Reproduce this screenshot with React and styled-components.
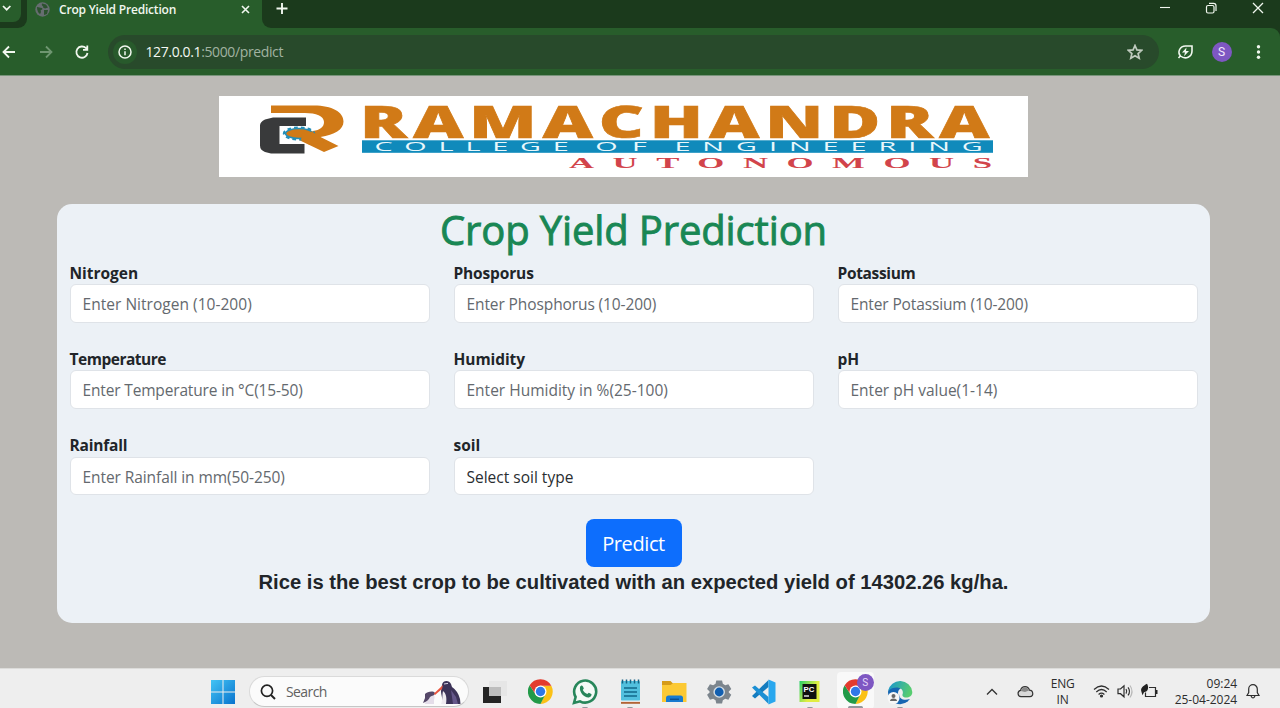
import React from "react";
import styled, { createGlobalStyle } from "styled-components";

const Global = createGlobalStyle`
  * { box-sizing: border-box; }
  html, body { margin: 0; padding: 0; }
  body { font-family: "Open Sans", "Noto Sans", sans-serif; overflow: hidden; }
`;

const Screen = styled.div`
  width: 1280px;
  height: 708px;
  display: flex;
  flex-direction: column;
  background: #bcbab6;
  overflow: hidden;
`;

/* ---------- browser ---------- */
const TabStrip = styled.div`
  height: 28px;
  display: flex;
  background: #285d2b;
  flex: none;
`;
const StripStart = styled.div`
  width: 27px;
  height: 28px;
  background: #1b3a1c;
  border-bottom-right-radius: 9px;
`;
const TabSearch = styled.div`
  width: 21px;
  height: 22px;
  background: #285d2b;
  border-bottom-right-radius: 8px;
  padding: 5px 0 0 2px;
  svg { display: block; }
`;
const Tab = styled.div`
  width: 235px;
  height: 18px;
  display: flex;
  align-items: center;
  padding: 0 12px 0 8px;
  color: #f1f7ef;
`;
const TabTitle = styled.span`
  font-size: 12px;
  font-weight: 600;
  letter-spacing: -0.2px;
  line-height: 18px;
  padding-top: 1px;
  margin-left: 9px;
  flex: 1;
  white-space: nowrap;
`;
const StripEnd = styled.div`
  flex: 1;
  height: 28px;
  background: #1b3a1c;
  border-bottom-left-radius: 9px;
  display: flex;
  justify-content: space-between;
  padding: 2px 16.500px 0 14px;
`;
const WindowButtons = styled.div`
  display: flex;
  gap: 34.3px;
`;
const ToolbarBack = styled.div`
  background: #1b3a1c;
  flex: none;
`;
const Toolbar = styled.div`
  height: 48px;
  background: #285d2b;
  border-top-right-radius: 9px;
  border-bottom: 1px solid #77947a;
  display: flex;
  align-items: center;
  padding: 0 13px 0 1px;
`;
const NavIcons = styled.div`
  display: flex;
  gap: 20.5px;
  width: 107px;
  flex: none;
`;
const UrlBar = styled.div`
  width: 1051px;
  height: 34px;
  border-radius: 17px;
  background: #284a2b;
  display: flex;
  align-items: center;
  padding: 0 16px 0 5px;
`;
const SiteInfo = styled.div`
  width: 24px;
  height: 24px;
  border-radius: 50%;
  background: #285a2c;
  display: grid;
  place-items: center;
`;
const Url = styled.div`
  flex: 1;
  margin-left: 8.5px;
  font-size: 14px;
  letter-spacing: -0.38px;
  color: #a1b2a1;
  b { font-weight: 400; color: #f4f8f3; }
`;
const Extras = styled.div`
  display: flex;
  align-items: center;
  justify-content: space-between;
  width: 91px;
  margin-left: 17px;
`;
const Avatar = styled.div`
  width: 20px;
  height: 20px;
  border-radius: 50%;
  background: #7e57c2;
  color: #f3eafd;
  font: 12px/20px Roboto, sans-serif;
  text-align: center;
`;

/* ---------- page ---------- */
const Page = styled.main`
  flex: 1;
  width: 1267px;
  display: flex;
  flex-direction: column;
  padding: 20.4px 0 0 57px;
`;
const Banner = styled.div`
  width: 809px;
  height: 81px;
  margin-left: 162px;
  background: #fff;
  svg { display: block; overflow: visible; }
`;
const Card = styled.section`
  width: 1153px;
  height: 419.4px;
  margin-top: 26.4px;
  border-radius: 15px;
  background: #ecf1f6;
  padding: 1px 12.5px 0;
  display: flex;
  flex-direction: column;
  align-items: center;
`;
const Title = styled.h1`
  margin: 0;
  font-size: 40px;
  line-height: 50px;
  height: 56px;
  font-weight: 400;
  letter-spacing: -0.14px;
  color: #198754;
  -webkit-text-stroke: 0.9px #198754;
  white-space: nowrap;
`;
const Fields = styled.div`
  width: 100%;
  display: grid;
  grid-template-columns: repeat(3, 360px);
  column-gap: 24px;
  row-gap: 24.2px;
`;
const Field = styled.label`
  display: block;
`;
const Label = styled.span`
  display: block;
  height: 23.5px;
  line-height: 25px;
  font-size: 15.5px;
  font-weight: 700;
  letter-spacing: ${(p) => p.$ls}px;
  color: #212529;
`;
const Control = styled.div`
  height: 38.5px;
  border: 1px solid #dfe3e8;
  border-radius: 6px;
  background: #fff;
  padding: 0 12px;
  line-height: 39px;
  font-size: 15.5px;
  letter-spacing: ${(p) => p.$ls}px;
  color: ${(p) => (p.$filled ? "#292d31" : "#64696e")};
  white-space: nowrap;
`;
const PredictButton = styled.button`
  margin: 24px 0 0;
  width: 96px;
  height: 48px;
  flex: none;
  border: 0;
  border-radius: 8px;
  background: #0d6efd;
  color: #fff;
  padding: 1px 0 0;
  font: 400 20px "Open Sans", sans-serif;
  letter-spacing: -0.4px;
`;
const Result = styled.p`
  margin: 3px 0 0;
  font: 700 20.22px/24px "Liberation Sans", Arial, sans-serif;
  color: #212529;
  white-space: nowrap;
`;

/* ---------- taskbar ---------- */
const Taskbar = styled.footer`
  height: 40px;
  flex: none;
  background: #eeeeee;
  border-top: 1px solid #dcdcda;
  display: flex;
  padding-left: 210px;
`;
const Start = styled.div`
  width: 39px;
  padding: 11px 0 0 1px;
`;
const Search = styled.div`
  width: 220px;
  height: 31px;
  margin-top: 7px;
  border-radius: 16px;
  background: #fbfbfb;
  border: 1px solid #dadada;
  border-bottom-color: #c6c6c6;
  display: flex;
  align-items: center;
  padding: 0 7px 0 10px;
`;
const SearchText = styled.span`
  flex: 1;
  margin-left: 10px;
  font-size: 14px;
  letter-spacing: -0.6px;
  color: #616161;
`;
const Apps = styled.div`
  display: flex;
  margin-left: 3.6px;
`;
const AppSlot = styled.div`
  position: relative;
  width: 45px;
  height: 39px;
  padding-top: 10px;
  display: flex;
  flex-direction: column;
  align-items: center;
  svg { display: block; flex: none; }
`;
const ActiveSlot = styled(AppSlot)`
  &::before {
    content: "";
    position: absolute;
    left: 4px;
    top: 3px;
    width: 37px;
    height: 37px;
    border-radius: 4px;
    background: #f9f9f9;
  }
  svg { position: relative; }
`;
const Running = styled.i`
  position: relative;
  width: ${(p) => (p.$wide ? 15 : 6)}px;
  height: 3px;
  margin-top: auto;
  margin-bottom: ${(p) => (p.$wide ? -1 : -2)}px;
  flex: none;
  border-radius: 2px;
  background: #92979c;
`;
const Badge = styled.span`
  position: absolute;
  left: 24px;
  top: 5px;
  width: 17px;
  height: 17px;
  border-radius: 50%;
  background: #7e57c2;
  color: #e6d9fa;
  font: 10px/17px Roboto, sans-serif;
  text-align: center;
`;
const Tray = styled.div`
  flex: 1;
  display: flex;
  margin-left: 63px;
`;
const TrayIcon = styled.div`
  width: ${(p) => p.$w}px;
  padding-top: ${(p) => p.$top}px;
  flex: none;
  svg { display: block; overflow: visible; }
`;
const TrayText = styled.div`
  width: ${(p) => p.$w}px;
  flex: none;
  padding-top: 7px;
  font-size: 12px;
  line-height: 15.5px;
  letter-spacing: ${(p) => p.$ls}px;
  text-align: ${(p) => p.$align};
  color: #2c2c2c;
  white-space: nowrap;
`;

const Stroke = ({ w, h = w, box, color = "#f1f7ef", sw = 1.8, children }) => (
  <svg width={w} height={h} viewBox={box || `0 0 ${w} ${h}`} fill="none" stroke={color} strokeWidth={sw}>
    {children}
  </svg>
);

const CollegeLogo = () => (
  <svg width="809" height="81" viewBox="219 96 809 81">
    <path d="M271 105.500h43c18 0 29.500 6.500 29.500 16 0 8-9 13.500-23 15.500l18 9-14.500 6-25-12 14-9c7-1 11-4 11-9 0-6-8-9-19-9h-34z" fill="#d17a17" />
    <path d="M306 117.500h-33l-8 2q-5 2.500-5 6v20q0 4.500 5 6.500l6 1.500h33.500v-9.500h-25v-18h26.500z" fill="#393a3b" />
    <ellipse cx="299" cy="133.500" rx="15" ry="5.800" fill="none" stroke="#248fba" strokeWidth="2.400" strokeDasharray="3.600 3" />
    <ellipse cx="299" cy="133.500" rx="13.500" ry="5" fill="#d17a17" stroke="#248fba" strokeWidth="1.500" />
    <path d="M302 134l10-2.500 8 5.500 4 5-14 3-9-5z" fill="#d17a17" />
    <text transform="translate(360 137.700) scale(1.6 1)" textLength="393.500" lengthAdjust="spacing" fontFamily="Open Sans" fontWeight="800" fontSize="43.500" fill="#d17a17" stroke="#d17a17" strokeWidth="0.600">RAMACHANDRA</text>
    <rect x="362" y="140.300" width="631" height="12.500" fill="#108abb" />
    <g transform="scale(2.400 1)" fontFamily="Open Sans" fontSize="12" fill="#e9f7fb">
      <text x="156" y="151" textLength="81">COLLEGE</text>
      <text x="248" y="151" textLength="21.500">OF</text>
      <text x="281" y="151" textLength="128.500">ENGINEERING</text>
    </g>
    <text transform="translate(569 167.700) scale(2.350 1)" textLength="180" fontFamily="Liberation Serif" fontWeight="700" fontSize="14.800" fill="#d2444b">AUTONOMOUS</text>
  </svg>
);

const Chrome = () => (
  <svg width="25" height="25" viewBox="0 0 48 48">
    <path d="M24 13h20.800A24 24 0 0 1 24 48L33 29.500z" fill="#fbc116" />
    <path d="M3.200 12A24 24 0 0 0 24 48L33.500 29.500H14.500z" fill="#229a48" />
    <path d="M3.200 12L14.500 29.500 24 13h20.800A24 24 0 0 0 3.200 12z" fill="#e33b2e" />
    <circle cx="24" cy="24" r="11.500" fill="#fff" />
    <circle cx="24" cy="24" r="9" fill="#2f78e8" />
  </svg>
);

const Penguins = () => (
  <svg width="39" height="26" viewBox="0 0 39 26">
    <path d="M20 6c0-4.500 7-6 9-1l1 3q6 4 8 12l.5 5H20c1-6-1-9-1-13z" fill="#3c3358" />
    <path d="M21 12c3 2 4 7 3 13h-5c2-5 1-9 2-13z" fill="#eeeaf0" />
    <path d="M29 11l5 7 2 7h-5z" fill="#65578a" />
    <path d="M3 25c1-6 3-10 6-10 4 0 4 3 3 6v4z" fill="#e4dde9" />
    <path d="M3 15c2-2 8-4 10-1 0 3-3 2-5 4-1 3-4 5-7 6l2-5z" fill="#554768" />
    <path d="M12 14.500l9-8.500-1 4-7 6z" fill="#e9533d" />
    <path d="M22 5l4-.6" stroke="#d9d3e4" />
  </svg>
);

/* label, text, label spacing, text spacing, has a value */
const fields = [
  ["Nitrogen", "Enter Nitrogen (10-200)", -0.03, 0.03],
  ["Phosporus", "Enter Phosphorus (10-200)", -0.15, -0.1],
  ["Potassium", "Enter Potassium (10-200)", -0.33, -0.13],
  ["Temperature", "Enter Temperature in °C(15-50)", -0.48, -0.16],
  ["Humidity", "Enter Humidity in %(25-100)", -0.07, 0],
  ["pH", "Enter pH value(1-14)", -0.1, 0],
  ["Rainfall", "Enter Rainfall in mm(50-250)", -0.18, -0.08],
  ["soil", "Select soil type", -0.05, 0, true],
];

export default function App() {
  return (
    <Screen>
      <Global />
      <TabStrip>
        <StripStart>
          <TabSearch><Stroke w={9} h={6} sw={1.7}><path d="M1 1l3.700 3.700L8.400 1" /></Stroke></TabSearch>
        </StripStart>
        <Tab>
          <svg width="15" height="15" viewBox="0 0 15 15">
            <circle cx="7.500" cy="7.500" r="7.200" fill="#666d70" />
            <path d="M2 5c2 0 3 1 5 1 1 1 0 2-1 2s1 2-1 4C3 11 2 8 2 5zM7 1.500c2 0 2 1 4 1l2 3-3 1-2-1c1-2-2-1-1-4zM9 8l4 0-1 4-3 1z" fill="#2b522e" />
          </svg>
          <TabTitle>Crop Yield Prediction</TabTitle>
          <Stroke w={9} sw={1.6}><path d="M1 1l7 7M8 1L1 8" /></Stroke>
        </Tab>
        <StripEnd>
          <Stroke w={12} sw={1.9}><path d="M6 1v11M.5 6.500h11" /></Stroke>
          <WindowButtons>
            <Stroke w={12} h={12} sw={1.1}><path d="M1 5.500h10" /></Stroke>
            <Stroke w={12} h={12} sw={1.2}><rect x="1.500" y="3.500" width="7.500" height="7.500" rx="1.500" /><path d="M4 1.300h4.500a2.500 2.500 0 0 1 2.500 2.500V9" /></Stroke>
            <Stroke w={12} h={12} sw={1.3}><path d="M1 1l10 10M11 1L1 11" /></Stroke>
          </WindowButtons>
        </StripEnd>
      </TabStrip>
      <ToolbarBack>
        <Toolbar>
          <NavIcons>
            <Stroke w={16} box="0 0 16 16"><path d="M14 8H3M8 2.500L2.500 8 8 13.500" /></Stroke>
            <Stroke w={16} box="0 0 16 16" color="#6f9671"><path d="M2 8h11M8 2.500L13.500 8 8 13.500" /></Stroke>
            <Stroke w={16} box="0 0 16 16"><path d="M13.500 9A5.600 5.600 0 1 1 12 4.200l1 1M13.300 1.500v4.300H9" /></Stroke>
          </NavIcons>
          <UrlBar>
            <SiteInfo>
              <Stroke w={14} sw={1.5}><circle cx="7" cy="7" r="6" /><path d="M7 6.200v4M7 3.500v1.500" /></Stroke>
            </SiteInfo>
            <Url><b>127.0.0.1</b>:5000/predict</Url>
            <Stroke w={16} color="#c0cbbf" sw={1.7}>
              <path d="M8 1.500l1.900 4.400 4.800.4-3.600 3.200 1.100 4.700L8 11.700l-4.200 2.500 1.100-4.700L1.300 6.300l4.800-.4z" />
            </Stroke>
          </UrlBar>
          <Extras>
            <Stroke w={18} h={16}>
              <path d="M2.500 14l2-2.200M4.500 12C1 8 4 2 9.500 2H16v5c0 6-6.500 9-11.500 5z" strokeWidth="1.600" />
              <path d="M10.500 3.500L6 8.500h3l-1 3.800 5-5.200h-3z" fill="#f1f7ef" stroke="none" />
            </Stroke>
            <Avatar>S</Avatar>
            <svg width="18" height="16" fill="#f1f7ef"><circle cx="9.500" cy="2.800" r="1.700" /><circle cx="9.500" cy="8" r="1.700" /><circle cx="9.500" cy="13.200" r="1.700" /></svg>
          </Extras>
        </Toolbar>
      </ToolbarBack>

      <Page>
        <Banner><CollegeLogo /></Banner>
        <Card>
          <Title>Crop Yield Prediction</Title>
          <Fields>
            {fields.map(([name, text, labelLs, textLs, filled]) => (
              <Field key={name}>
                <Label $ls={labelLs}>{name}</Label>
                <Control $ls={textLs} $filled={filled}>{text}</Control>
              </Field>
            ))}
          </Fields>
          <PredictButton>Predict</PredictButton>
          <Result>Rice is the best crop to be cultivated with an expected yield of 14302.26 kg/ha.</Result>
        </Card>
      </Page>

      <Taskbar>
        <Start>
          <svg width="24" height="24" viewBox="0 0 24 24">
            <defs><linearGradient id="win" x2="1" y2="1"><stop stopColor="#43c4f4" /><stop offset="1" stopColor="#0873ce" /></linearGradient></defs>
            <path d="M0 0h11.500v11.500H0zM12.500 0H24v11.500H12.500zM0 12.500h11.500V24H0zM12.500 12.500H24V24H12.500z" fill="url(#win)" />
          </svg>
        </Start>
        <Search>
          <Stroke w={16} color="#222" sw={1.7}><circle cx="7" cy="6.800" r="5.600" /><path d="M11 11l4 4" strokeWidth="2" /></Stroke>
          <SearchText>Search</SearchText>
          <Penguins />
        </Search>
        <Apps>
          <AppSlot>
            <svg width="24" height="25" viewBox="0 0 24 25">
              <rect x="0" y="8" width="18" height="16" fill="#242424" />
              <rect x="6" y="2" width="18" height="15" fill="#e6e6e6" />
              <rect x="6" y="8" width="12" height="9" fill="#bdbdbd" />
            </svg>
          </AppSlot>
          <AppSlot><Chrome /></AppSlot>
          <AppSlot>
            <svg width="26" height="26" viewBox="0 0 26 26">
              <path d="M2 24l1.600-6A11 11 0 1 1 8 22.300z" fill="#f4faf6" stroke="#27865a" strokeWidth="2.600" />
              <path d="M8 8c1-2 2-2 3-.5l.8 2-1 1.500c1 2 2.500 3.300 4.500 4l1.500-1.300 2.500 1.300c1 1-1 3.500-3 3.500C12 18.500 7 13 8 8z" fill="#27865a" />
            </svg>
            <Running />
          </AppSlot>
          <AppSlot>
            <svg width="21" height="26" viewBox="0 0 21 26">
              <rect x="1" y="2" width="19" height="20" rx="1" fill="#52c0de" />
              <path d="M2.500.5v4M6.500.5v4M10.500.5v4M14.500.5v4M18.500.5v4" stroke="#176284" strokeWidth="1.500" />
              <path d="M4 9h13M4 13h13M4 17h13" stroke="#12688a" strokeWidth="1.300" />
              <path d="M1 22.800h19v2H1z" fill="#b26335" /><path d="M1 21.500h19v1H1z" fill="#eef3f4" />
            </svg>
            <Running />
          </AppSlot>
          <AppSlot>
            <svg width="26" height="25" viewBox="0.500 0 26 25">
              <path d="M0 2h9l3 3-3 3H0z" fill="#d69b18" />
              <path d="M0 6h9l3-2h13v19H0z" fill="#fcc934" />
              <path d="M4.500 23v-4q0-2.500 2.500-2.500h12q2.500 0 2.500 2.500v4z" fill="#187bd0" />
              <path d="M8.500 20.300h9" stroke="#0c4f92" strokeWidth="1.500" />
            </svg>
          </AppSlot>
          <AppSlot>
            <svg width="26" height="26" viewBox="1.500 0 26 26">
              <path d="M10 1h6l.8 3.500 2.500 1.400L22.600 5l3 5-2.600 2.500v1l2.600 2.500-3 5-3.300-1-2.500 1.500L16 25h-6l-.8-3.500L6.700 20l-3.300 1-3-5L3 13.500v-1L.4 10l3-5 3.300.9 2.500-1.400z" fill="#7c858d" transform="translate(1.200 .5) scale(.96)" />
              <circle cx="13.700" cy="13" r="5.800" fill="#d4dde4" /><circle cx="13.700" cy="13" r="4.400" fill="#125fb0" />
            </svg>
          </AppSlot>
          <AppSlot>
            <svg width="26" height="26" viewBox="1.500 0 26 26">
              <path d="M18 1v7L4.500 19.500 1.500 17z" fill="#147cbf" />
              <path d="M1.500 8.500L4.500 6.500 18 18v7z" fill="#1b8fd4" />
              <path d="M18 .5l7 3v19l-7 3z" fill="#29a7ee" />
            </svg>
          </AppSlot>
          <AppSlot>
            <svg width="22" height="25" viewBox="0.500 0 22 25">
              <defs><linearGradient id="pc" x2="1" y2=".6"><stop stopColor="#22cf69" /><stop offset=".7" stopColor="#e1ed42" /></linearGradient></defs>
              <rect x="1" y="2" width="20" height="21" fill="url(#pc)" /><rect x="4" y="5" width="14" height="15" fill="#101010" />
              <text x="5" y="12.800" fontFamily="Liberation Sans" fontWeight="700" fontSize="7.800" fill="#fff">PC</text>
              <path d="M5.500 17h5" stroke="#fff" strokeWidth="1.300" />
            </svg>
            <Running />
          </AppSlot>
          <ActiveSlot><Chrome /><Badge>S</Badge><Running $wide /></ActiveSlot>
          <AppSlot>
            <svg width="26" height="26" viewBox="0 0 26 26">
              <defs>
                <linearGradient id="edge" x2="1" y2=".3"><stop stopColor="#1794d3" /><stop offset="1" stopColor="#56cc70" /></linearGradient>
              </defs>
              <path d="M1 13a12 12 0 0 0 20 9c-6 1-11-2-10-8 0-3 2-4 3-5C9 5 2 7 1 13z" fill="#1766b2" />
              <path d="M1 12A12.300 12.300 0 0 1 25.300 13c0 4-3 5.500-6 5.500-3.500 0-4.500-2-3.500-4C17 8 7 6 1 12z" fill="url(#edge)" />
              <path d="M12 15c0 5 5 7 11 5l-3 3c-6 2-10-3-8-8z" fill="#1766b2" />
              <circle cx="6.500" cy="19" r="6" fill="#f7f7f7" /><circle cx="6.500" cy="17" r="2" fill="#676767" /><path d="M3 22q0-2.500 3.500-2.500T10 22z" fill="#676767" />
            </svg>
            <Running />
          </AppSlot>
        </Apps>
        <Tray>
          <TrayIcon $w={31} $top={19}><Stroke w={12} h={8} color="#333" sw={1.3}><path d="M1 6.500l5-5 5 5" /></Stroke></TrayIcon>
          <TrayIcon $w={28} $top={16}>
            <svg width="17" height="13" viewBox="0 0 17 13"><path d="M4 11.700a3.200 3.200 0 0 1-.5-6.300C5 .5 11 .5 12.500 5.200c4 0 4.500 6.500.5 6.500z" fill="#d8d8d8" stroke="#333" strokeWidth="1.200" /><path d="M3.800 6C5 1.500 10 1 12 5.500L8 7z" fill="#888" /></svg>
          </TrayIcon>
          <TrayText $w={36} $ls={-0.2} $align="center">ENG<br />IN</TrayText>
          <TrayIcon $w={24} $top={15}>
            <svg width="28" height="15" viewBox="-12 0 28 15" fill="none" stroke="#2d2d2d" strokeWidth="1.200"><path d="M1 5.500q7.500-7 15 0M3.300 8q5.200-5 10.400 0M5.600 10.500q2.900-2.600 5.800 0" /><circle cx="8.500" cy="12" r="1" fill="#2d2d2d" /></svg>
          </TrayIcon>
          <TrayIcon $w={35.5} $top={15}>
            <svg width="28" height="15" viewBox="-12 0 28 15" fill="none" stroke="#2d2d2d" strokeWidth="1.200"><path d="M1 5h2.500L7 1.800v11L3.500 9.700H1zM9 5q1.500 2.300 0 4.600M11 3.300q3 4 0 8" /><path d="M13 1.500q4 6 0 12" stroke="#b9b9b9" /></svg>
          </TrayIcon>
          <TrayIcon $w={20} $top={14}>
            <svg width="19" height="16" viewBox="0 0 19 16"><path d="M5.500 9.500v4h10V4.500H9" fill="none" stroke="#2d2d2d" strokeWidth="1.200" /><path d="M16.600 7v4" stroke="#222" strokeWidth="1.800" /><path d="M1.500 9C0 5 3 3 7 .8c2 3.500 1.500 8-3 8.400l-1.500 3z" fill="#222" /></svg>
          </TrayIcon>
          <TrayText $w={77} $ls={-0.02} $align="right">09:24<br />25-04-2024</TrayText>
          <TrayIcon $w={22} $top={14}>
            <svg width="32" height="17" viewBox="-9 0 32 17" fill="none" stroke="#2d2d2d" strokeWidth="1.200"><path d="M1 12.500l1.700-3V6a4.300 4.300 0 0 1 8.600 0v3.500l1.700 3zM5 13q2 4 4 0" /></svg>
          </TrayIcon>
        </Tray>
      </Taskbar>
    </Screen>
  );
}
